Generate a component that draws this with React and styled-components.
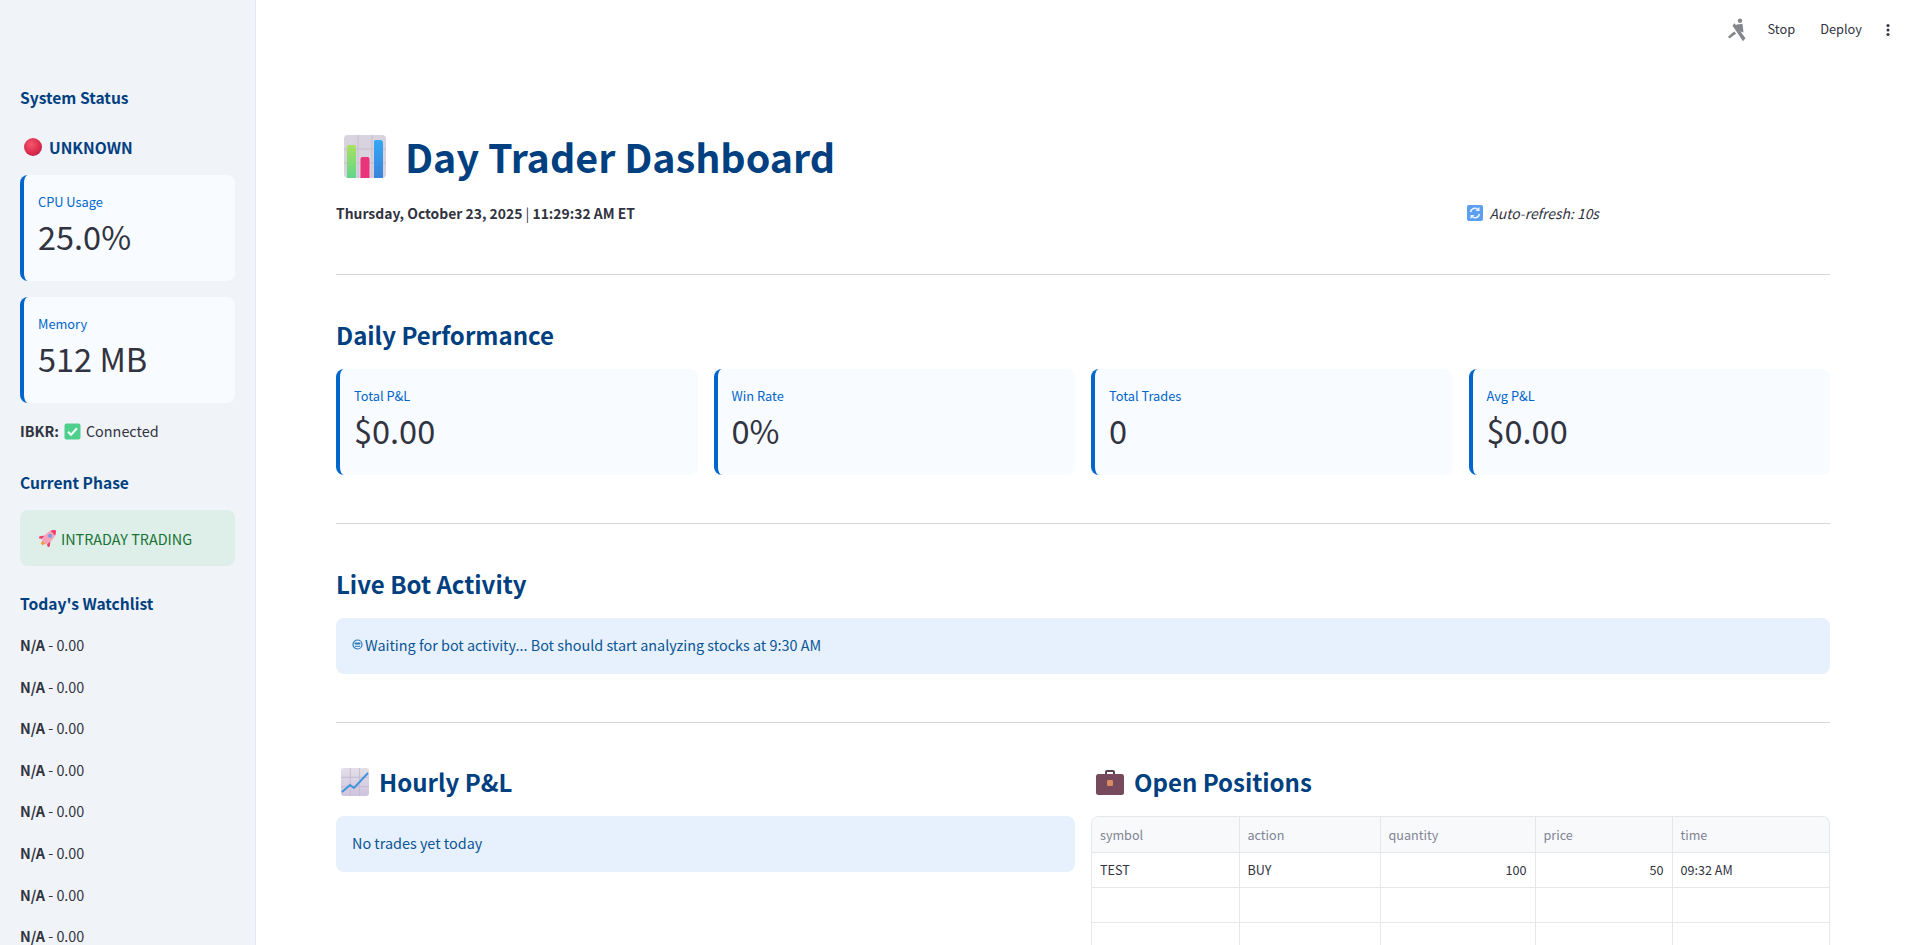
import React from 'react';
import styled, { createGlobalStyle } from 'styled-components';

const FONT = '"Noto Sans CJK JP", "Noto Sans", sans-serif';

const GlobalStyle = createGlobalStyle`
  html, body {
    margin: 0;
    padding: 0;
    height: 100%;
    overflow: hidden;
    background: #ffffff;
  }
  body {
    font-family: ${FONT};
    color: #31333f;
  }
  * {
    box-sizing: border-box;
  }
`;

const Page = styled.div`
  display: flex;
  height: 945px;
  overflow: hidden;
`;

const Sidebar = styled.aside`
  flex: 0 0 256px;
  height: 945px;
  overflow: hidden;
  background: #f0f3f8;
  border-right: 1px solid #e4e7ee;
  padding: 84px 20px 0;
`;

const Main = styled.main`
  position: relative;
  flex: 1;
  height: 945px;
  overflow: hidden;
  padding: 0 90px 0 80px;
`;

const Toolbar = styled.div`
  position: absolute;
  top: 0;
  right: 0;
  height: 60px;
  display: flex;
  align-items: center;
  font-size: 12.8px;
  color: #31333f;
`;

const ToolbarButton = styled.span`
  margin-left: ${(p) => p.$gap}px;
  padding-bottom: 2px;
  line-height: 20px;
`;

const MenuDots = styled.svg`
  width: 16px;
  height: 16px;
  margin: 0 24px 0 18px;
`;

const SideHeading = styled.h3`
  margin: ${(p) => p.$top || 0}px 0 0;
  font-size: 15.6px;
  line-height: 26px;
  font-weight: 600;
  color: #004080;
`;

const StatusLine = styled.div`
  display: flex;
  align-items: center;
  gap: 6px;
  margin: 24px 0 0 3px;
  font-size: 15.6px;
  line-height: 26px;
  font-weight: 600;
  color: #004080;
`;

const MetricCard = styled.div`
  height: 106px;
  margin-top: ${(p) => p.$top || 0}px;
  padding: 16px 16px 0 14px;
  background: #f8fbff;
  border-left: 4px solid #0066cc;
  border-radius: 8px;
`;

const MetricLabel = styled.div`
  font-size: 12.8px;
  line-height: 21px;
  color: #0066cc;
`;

const MetricValue = styled.div`
  font-size: 32.5px;
  line-height: 47px;
  color: #31333f;
`;

const ConnectionLine = styled.div`
  display: flex;
  align-items: center;
  gap: 5px;
  margin-top: 16px;
  font-size: 14.4px;
  line-height: 24px;

  strong {
    font-weight: 600;
  }
`;

const PhaseBox = styled.div`
  display: flex;
  align-items: center;
  gap: 4px;
  height: 56px;
  margin-top: 15px;
  padding-left: 19px;
  background: #ddefe8;
  border-radius: 8px;
  font-size: 14.4px;
  color: #177233;
`;

const WatchRow = styled.div`
  font-size: 14.4px;
  line-height: 24px;
  margin-bottom: 17.6px;

  strong {
    font-weight: 600;
  }
`;

const WatchList = styled.div`
  margin-top: 17px;
`;

const Title = styled.h1`
  display: flex;
  align-items: center;
  gap: 19px;
  margin: 0;
  padding: 128px 0 0 8px;
  font-size: 39.400px;
  line-height: 56px;
  font-weight: 700;
  color: #004080;
`;

const DateRow = styled.div`
  display: grid;
  grid-template-columns: 3fr 1fr;
  gap: 16px;
  margin-top: 17px;
  font-size: 13.9px;
  line-height: 24px;
`;

const DateText = styled.div`
  font-weight: 600;

  span {
    color: #31333f;
    font-weight: 400;
  }
`;

const RefreshNote = styled.div`
  display: flex;
  align-items: center;
  gap: 7px;
  padding-left: 6px;
  font-style: italic;
`;

const Divider = styled.hr`
  height: 1px;
  margin: ${(p) => p.$top}px 0 0;
  border: 0;
  background: #d6d6d8;
`;

const SectionHeading = styled.h2`
  display: flex;
  align-items: center;
  gap: 10px;
  margin: ${(p) => p.$top}px 0 0;
  padding-left: ${(p) => p.$indent || 0}px;
  font-size: 24px;
  line-height: 40px;
  font-weight: 600;
  color: #004080;
`;

const MetricGrid = styled.div`
  display: grid;
  grid-template-columns: repeat(4, 1fr);
  gap: 16px;
  margin-top: 14px;
`;

const InfoBox = styled.div`
  display: flex;
  align-items: center;
  gap: 2px;
  height: 56px;
  margin-top: ${(p) => p.$top}px;
  padding: 0 0 3px 16px;
  background: #e7f1fd;
  border-radius: 8px;
  font-size: 14.4px;
  color: #0a5596;
`;

const Columns = styled.div`
  display: grid;
  grid-template-columns: 1fr 1fr;
  gap: 16px;
`;

const TableWrap = styled.div`
  margin-top: 14px;
  border: 1px solid #e6e7eb;
  border-bottom: 0;
  border-radius: 8px 8px 0 0;
  overflow: hidden;
`;

const Table = styled.table`
  width: 100%;
  table-layout: fixed;
  border-collapse: collapse;
  font-size: 12.6px;
`;

const Th = styled.th`
  height: 35px;
  padding: 0 8px;
  background: #f8f9fb;
  border-right: 1px solid #e6e7eb;
  border-bottom: 1px solid #e6e7eb;
  color: #808495;
  font-weight: 400;
  text-align: left;

  &:last-child {
    border-right: 0;
  }
`;

const Td = styled.td`
  height: 35px;
  padding: 0 8px;
  border-right: 1px solid #e6e7eb;
  border-bottom: 1px solid #e6e7eb;
  color: #31333f;
  text-align: ${(p) => (p.$num ? 'right' : 'left')};

  &:last-child {
    border-right: 0;
  }
`;

const RunningMan = () => (
  <svg width="18" height="24" viewBox="0 0 18 24" fill="#85868c">
    <circle cx="12" cy="2.800" r="2.200" />
    <path d="M9 6.500l5.500-.8 1 8.800 -3-1 -7.500-5z" />
    <path d="M4.500 7.500l2-2.200 11 15 -2.500 3z" />
    <path d="M6 13.500l2.200 2 -6.700 5 -1.500-1.800z" />
  </svg>
);

const RedBall = () => (
  <svg width="20" height="20" viewBox="0 0 20 20">
    <defs>
      <radialGradient id="ball" cx="0.4" cy="0.35" r="0.75">
        <stop offset="0" stopColor="#f4566e" />
        <stop offset="0.7" stopColor="#d92a49" />
        <stop offset="1" stopColor="#a92a58" />
      </radialGradient>
    </defs>
    <circle cx="10" cy="10" r="9" fill="url(#ball)" />
  </svg>
);

const CheckBox = () => (
  <svg width="17" height="17" viewBox="0 0 17 17">
    <rect x="0.500" y="0.500" width="16" height="16" rx="2" fill="#4fcf8c" />
    <path d="M4 8.800l3 3 6-6.500" fill="none" stroke="#f4fff8" strokeWidth="2" />
  </svg>
);

const Rocket = () => (
  <svg width="18" height="18" viewBox="0 0 18 18">
    <g transform="rotate(45 9 9)">
      <path d="M5 9.500l-3 4v2.500l3.500-2zM13 9.500l3 4v2.500l-3.500-2z" fill="#ef3f6f" />
      <path d="M6.800 14.500h4.400l-1 3.500h-2.400z" fill="#f59a3a" />
      <path d="M9 -2c2.800 2 4.200 5.500 4.200 9.500 0 3-.7 5.500-1.500 7.500h-5.400c-.8-2-1.500-4.500-1.500-7.500C4.800 3.500 6.200 0 9 -2z" fill="#f7a2bb" />
      <path d="M9 -2c1.500 1 2.600 2.500 3.300 4.200h-6.600C6.400 .5 7.500 -1 9 -2z" fill="#ef3f6f" />
      <circle cx="9" cy="6" r="2" fill="#6f9fe0" />
    </g>
  </svg>
);

const BarChart = () => (
  <svg width="42" height="43" viewBox="0 0 42 43">
    <defs>
      <linearGradient id="g1" x1="0" y1="0" x2="0" y2="1">
        <stop offset="0" stopColor="#a9e25e" />
        <stop offset="1" stopColor="#5fd58c" />
      </linearGradient>
      <linearGradient id="g3" x1="0" y1="0" x2="0" y2="1">
        <stop offset="0" stopColor="#35a8f5" />
        <stop offset="1" stopColor="#3b82d8" />
      </linearGradient>
    </defs>
    <rect width="42" height="43" rx="4" fill="#d8d3df" />
    <path d="M14 0v43M28 0v43M0 14h42M0 28h42" stroke="#c5bfd0" strokeWidth="1" />
    <path d="M3 12a2 2 0 0 1 2-2h5a2 2 0 0 1 2 2v31H3z" fill="url(#g1)" />
    <path d="M16.500 24a2 2 0 0 1 2-2h5a2 2 0 0 1 2 2v19h-9z" fill="#ea3378" />
    <path d="M30 7a2 2 0 0 1 2-2h4a3 3 0 0 1 3 3v35h-9z" fill="url(#g3)" />
  </svg>
);

const LineChart = () => (
  <svg width="28" height="28" viewBox="0 0 28 28">
    <defs>
      <linearGradient id="lc" x1="0" y1="0" x2="0" y2="1">
        <stop offset="0" stopColor="#e3dfe8" />
        <stop offset="1" stopColor="#cfc4de" />
      </linearGradient>
    </defs>
    <rect width="28" height="28" rx="3" fill="url(#lc)" />
    <path d="M9.300 0v28M18.600 0v28M0 9.300h28M0 18.600h28" stroke="#bfb8cb" strokeWidth="0.800" />
    <path d="M1 24l8-7 4 3 14-15" fill="none" stroke="#3f94dc" strokeWidth="2" />
  </svg>
);

const Briefcase = () => (
  <svg width="28" height="28" viewBox="0 0 28 28">
    <path d="M9 7V4a2 2 0 0 1 2-2h6a2 2 0 0 1 2 2v3h-2V4h-6v3z" fill="#5a4453" />
    <rect y="6" width="28" height="21" rx="2.500" fill="#764a5c" />
    <rect x="11" y="12" width="6" height="6" rx="1" fill="#d88a63" />
  </svg>
);

const RefreshIcon = () => (
  <svg width="16" height="16" viewBox="0 0 16 16">
    <rect width="16" height="16" rx="2" fill="#5c9ef0" />
    <path d="M3.500 7a4.500 4.500 0 0 1 7.500-2.500M12.500 9a4.500 4.500 0 0 1-7.500 2.500" fill="none" stroke="#eaf3ff" strokeWidth="1.600" />
    <path d="M12.500 2v4h-4zM3.500 14v-4h4z" fill="#eaf3ff" />
  </svg>
);

const SmallBot = () => (
  <svg width="11" height="11" viewBox="0 0 11 11">
    <circle cx="5.500" cy="5.500" r="4.500" fill="none" stroke="#2b78b8" strokeWidth="1.200" />
    <rect x="2.500" y="3.500" width="6" height="2" rx="1" fill="#2b78b8" />
    <path d="M3 7.300h5" stroke="#2b78b8" strokeWidth="1" />
  </svg>
);

const sideMetrics = [
  { label: 'CPU Usage', value: '25.0%' },
  { label: 'Memory', value: '512 MB' },
];

const dailyMetrics = [
  { label: 'Total P&L', value: '$0.00' },
  { label: 'Win Rate', value: '0%' },
  { label: 'Total Trades', value: '0' },
  { label: 'Avg P&L', value: '$0.00' },
];

const columnWidths = ['147px', '141px', '155px', '137px', 'auto'];
const columns = ['symbol', 'action', 'quantity', 'price', 'time'];

const App = () => (
  <Page>
    <GlobalStyle />
    <Sidebar>
      <SideHeading>System Status</SideHeading>
      <StatusLine>
        <RedBall />
        UNKNOWN
      </StatusLine>
      {sideMetrics.map((m, i) => (
        <MetricCard key={m.label} $top={i === 0 ? 15 : 16}>
          <MetricLabel>{m.label}</MetricLabel>
          <MetricValue>{m.value}</MetricValue>
        </MetricCard>
      ))}
      <ConnectionLine>
        <strong>IBKR:</strong>
        <CheckBox />
        Connected
      </ConnectionLine>
      <SideHeading $top={26}>Current Phase</SideHeading>
      <PhaseBox>
        <Rocket />
        INTRADAY TRADING
      </PhaseBox>
      <SideHeading $top={24}>Today's Watchlist</SideHeading>
      <WatchList>
        {Array.from({ length: 8 }).map((_, i) => (
          <WatchRow key={i}>
            <strong>N/A</strong> - 0.00
          </WatchRow>
        ))}
      </WatchList>
    </Sidebar>

    <Main>
      <Toolbar>
        <RunningMan />
        <ToolbarButton $gap={22}>Stop</ToolbarButton>
        <ToolbarButton $gap={25}>Deploy</ToolbarButton>
        <MenuDots viewBox="0 0 16 16" fill="#31333f">
          <circle cx="8" cy="3.500" r="1.500" />
          <circle cx="8" cy="8" r="1.500" />
          <circle cx="8" cy="12.500" r="1.500" />
        </MenuDots>
      </Toolbar>

      <Title>
        <BarChart />
        Day Trader Dashboard
      </Title>
      <DateRow>
        <DateText>
          Thursday, October 23, 2025 <span>|</span> 11:29:32 AM ET
        </DateText>
        <RefreshNote>
          <RefreshIcon />
          Auto-refresh: 10s
        </RefreshNote>
      </DateRow>
      <Divider $top={49} />

      <SectionHeading $top={40}>Daily Performance</SectionHeading>
      <MetricGrid>
        {dailyMetrics.map((m) => (
          <MetricCard key={m.label}>
            <MetricLabel>{m.label}</MetricLabel>
            <MetricValue>{m.value}</MetricValue>
          </MetricCard>
        ))}
      </MetricGrid>
      <Divider $top={48} />

      <SectionHeading $top={40}>Live Bot Activity</SectionHeading>
      <InfoBox $top={14}>
        <SmallBot />
        Waiting for bot activity... Bot should start analyzing stocks at 9:30 AM
      </InfoBox>
      <Divider $top={48} />

      <Columns>
        <div>
          <SectionHeading $top={39} $indent={5}>
            <LineChart />
            Hourly P&L
          </SectionHeading>
          <InfoBox $top={14}>No trades yet today</InfoBox>
        </div>
        <div>
          <SectionHeading $top={39} $indent={5}>
            <Briefcase />
            Open Positions
          </SectionHeading>
          <TableWrap>
            <Table>
              <colgroup>
                {columnWidths.map((w, i) => (
                  <col key={i} style={{ width: w }} />
                ))}
              </colgroup>
              <thead>
                <tr>
                  {columns.map((c) => (
                    <Th key={c}>{c}</Th>
                  ))}
                </tr>
              </thead>
              <tbody>
                <tr>
                  <Td>TEST</Td>
                  <Td>BUY</Td>
                  <Td $num>100</Td>
                  <Td $num>50</Td>
                  <Td>09:32 AM</Td>
                </tr>
                {[0, 1].map((r) => (
                  <tr key={r}>
                    {columns.map((c) => (
                      <Td key={c} />
                    ))}
                  </tr>
                ))}
              </tbody>
            </Table>
          </TableWrap>
        </div>
      </Columns>
    </Main>
  </Page>
);

export default App;
